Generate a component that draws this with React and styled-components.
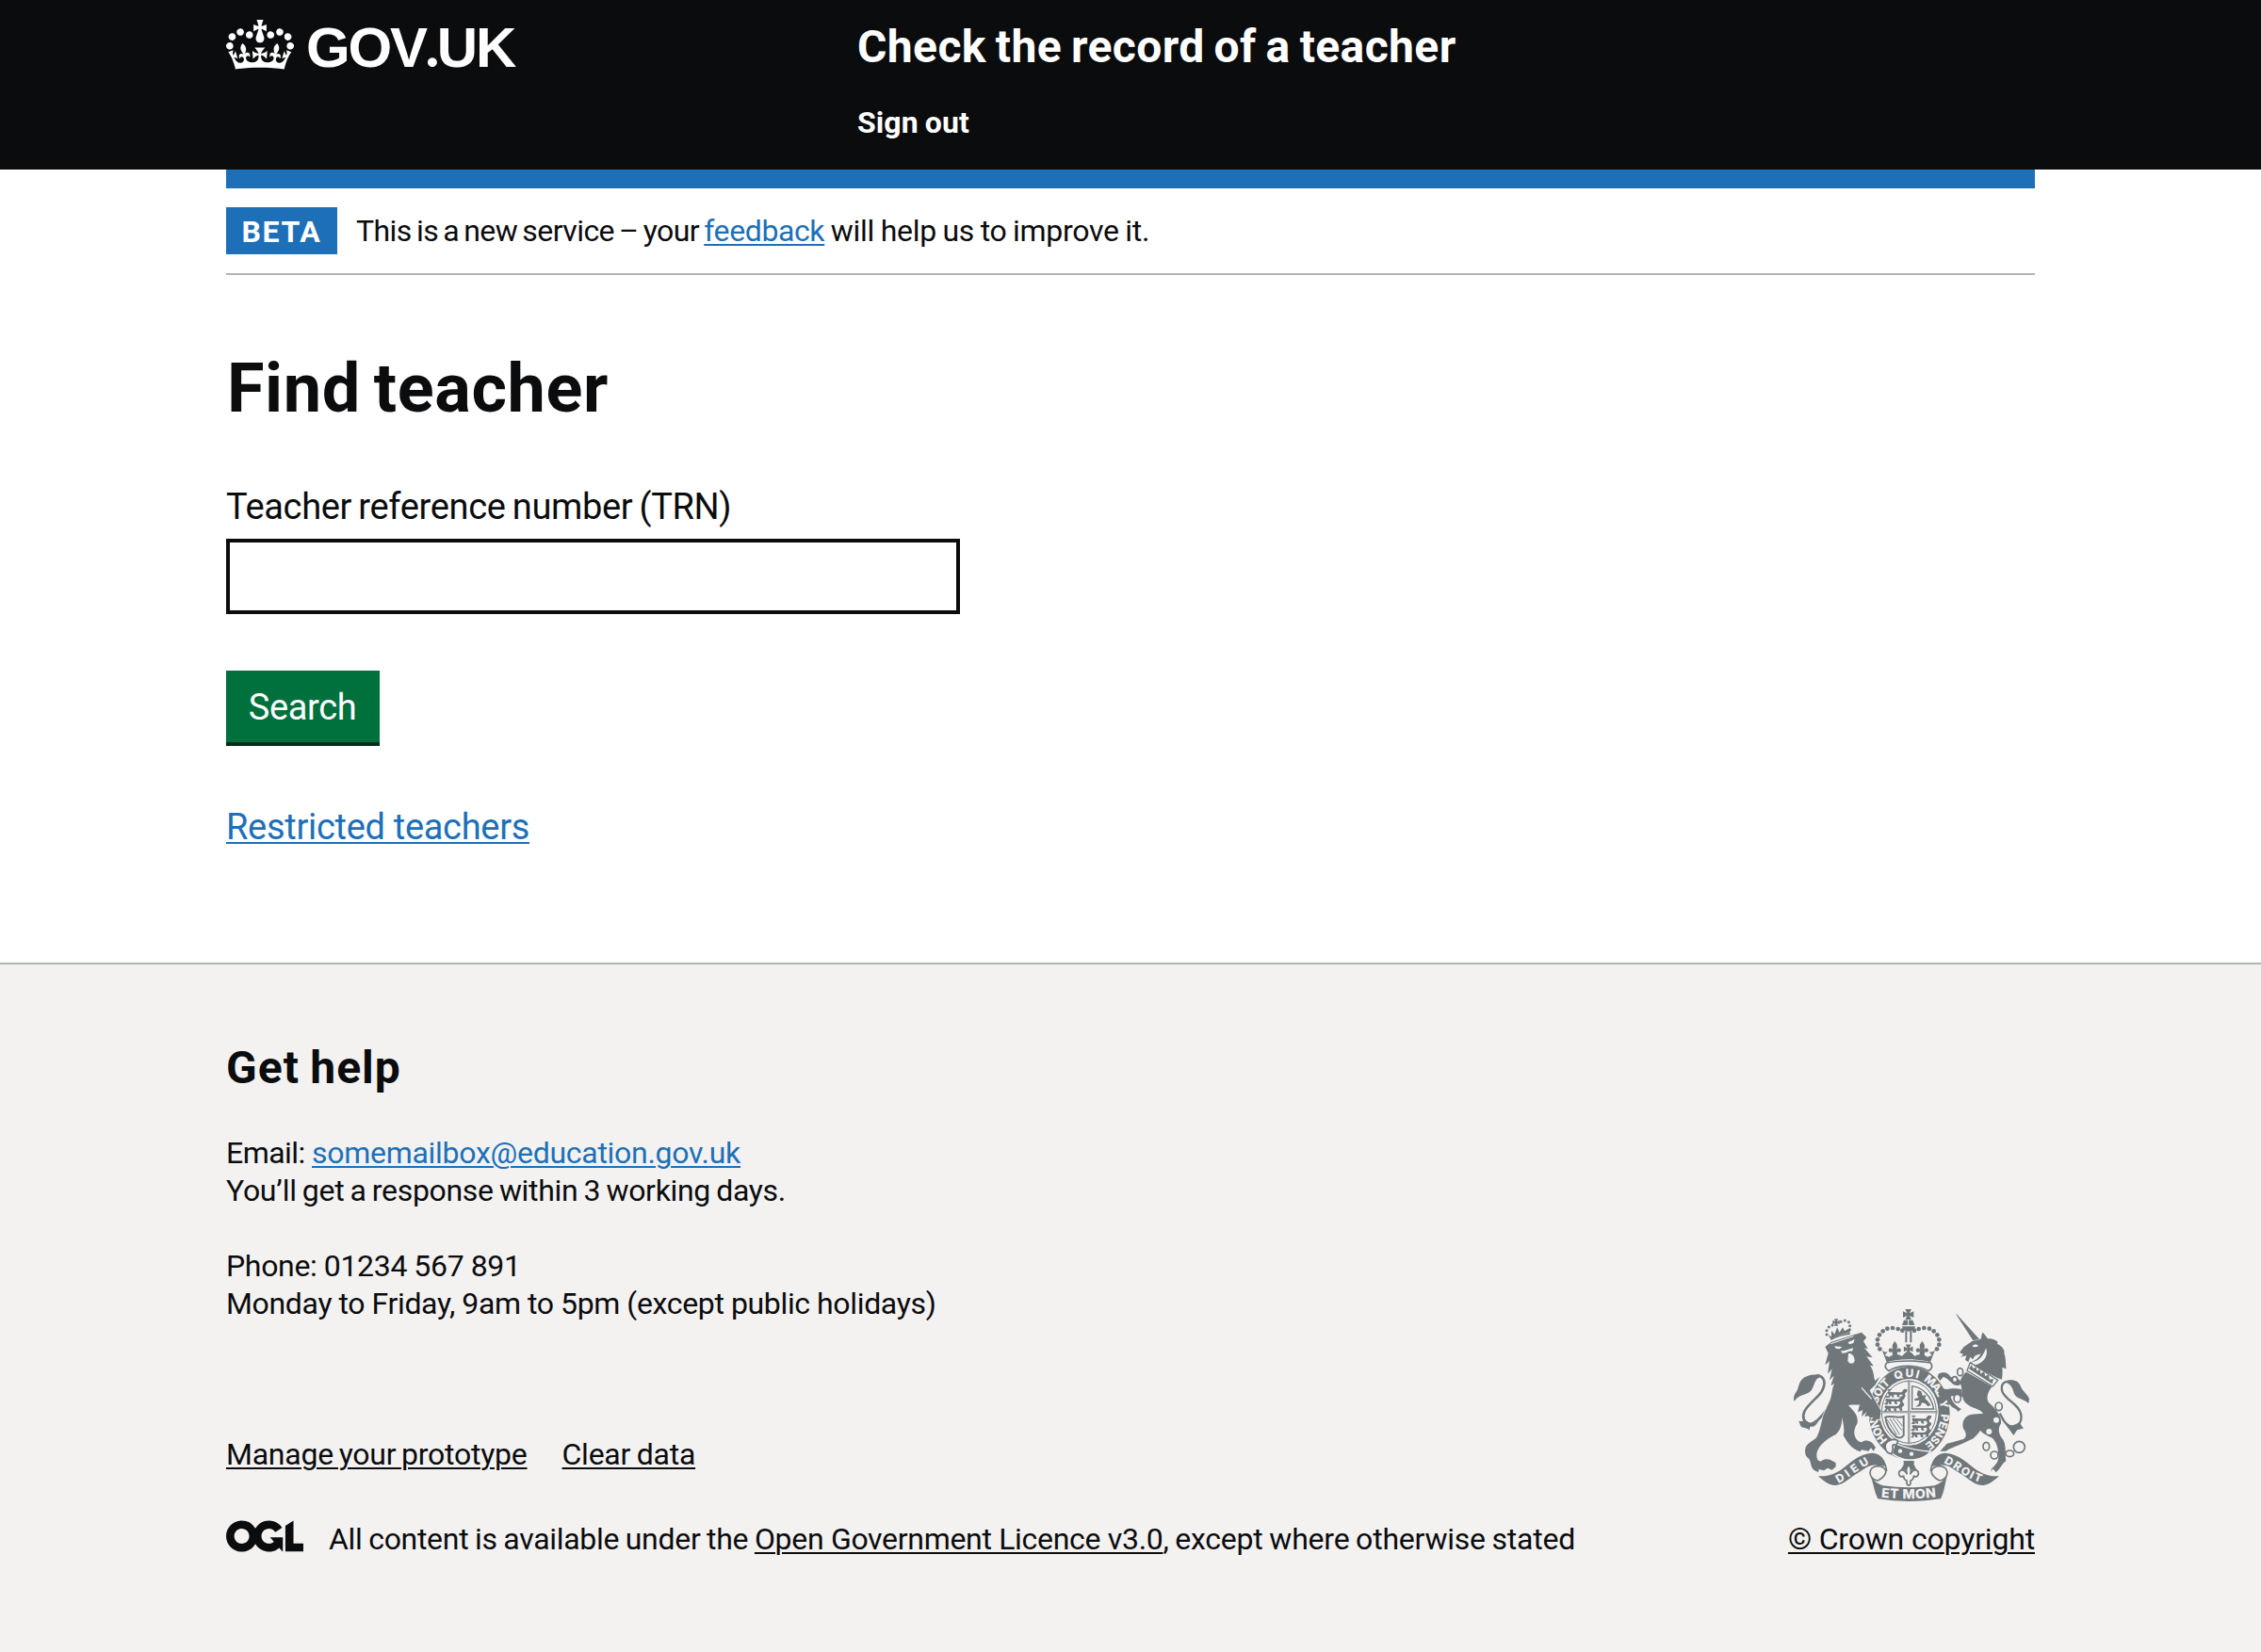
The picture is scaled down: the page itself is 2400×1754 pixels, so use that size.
import React from "react";
import styled, { createGlobalStyle } from "styled-components";

const ink = "#0b0c0e";
const blue = "#1d70b8";
const green = "#00703c";
const rule = "#b1b4b6";
const footerBg = "#f3f2f1";
const crestGrey = "#6f777b";

const GlobalStyle = createGlobalStyle`
  *, *::before, *::after { box-sizing: border-box; }
  body {
    margin: 0;
    background: #fff;
    color: ${ink};
    font-family: Roboto, "Liberation Sans", sans-serif;
    font-size: 32px;
    line-height: 40px;
  }
`;

const Container = styled.div`
  width: 1920px;
  margin: 0 auto;
`;

/* A run of text with its own tracking and word gap. */
const Run = styled.span`
  letter-spacing: ${(p) => p.$ls || 0}px;
  word-spacing: ${(p) => p.$ws || 0}px;
  white-space: pre;
`;

const Link = styled.a`
  color: ${(p) => (p.$dark ? ink : blue)};
  letter-spacing: ${(p) => p.$ls || 0}px;
  word-spacing: ${(p) => p.$ws || 0}px;
  text-decoration: underline;
  text-decoration-thickness: 2px;
  text-underline-offset: 3px;
  white-space: nowrap;
`;

/* ---------- Header ---------- */
const Header = styled.header`
  height: 180px;
  background: ${ink};
  color: #fff;
`;

const HeaderGrid = styled(Container)`
  display: grid;
  grid-template-columns: 670px 1fr;
  align-items: start;
`;

const Logo = styled.a`
  display: flex;
  align-items: flex-start;
  gap: 13px;
  padding-top: 21px;
  color: #fff;
`;

const Crown = styled.svg`
  display: block;
  width: 72px;
  height: 53px;
  fill: currentColor;
`;

const LogoText = styled.span`
  font: 700 60px/54px "Liberation Sans", Arial, sans-serif;
  letter-spacing: -2.2px;
  white-space: nowrap;
`;

const LogoDot = styled.span`
  font-family: Lato, sans-serif;
  font-weight: 900;
`;

const ServiceNav = styled.div`
  display: flex;
  flex-direction: column;
  gap: 30px;
  padding-top: 20px;
`;

const ServiceName = styled.a`
  font-size: 48px;
  line-height: 60px;
  font-weight: 700;
`;

const NavItem = styled.a`
  font-weight: 700;
`;

/* ---------- Phase banner ---------- */
const BlueBar = styled(Container)`
  height: 20px;
  background: ${blue};
`;

const PhaseBanner = styled(Container)`
  display: flex;
  align-items: center;
  gap: 20px;
  padding: 20px 0;
  border-bottom: 2px solid ${rule};
`;

const Tag = styled.strong`
  width: 118px;
  height: 50px;
  padding: 2px 0 0;
  background: ${blue};
  color: #fff;
  font-weight: 700;
  line-height: 48px;
  letter-spacing: 1.6px;
  text-align: center;
`;

/* ---------- Main ---------- */
const Main = styled(Container)`
  display: flex;
  flex-direction: column;
  align-items: flex-start;
  padding: 80px 0 120px;
  font-size: 38px;
  line-height: 50px;
`;

const Title = styled.h1`
  margin: 0 0 59px;
  padding: 1px 0 0 1px;
  font-size: 72px;
  line-height: 80px;
  font-weight: 700;
`;

const Label = styled.label`
  padding-top: 1px;
  margin-bottom: 9px;
`;

const Input = styled.input`
  width: 779px;
  height: 80px;
  margin: 0 0 60px;
  border: 4px solid ${ink};
  border-radius: 0;
  background: #fff;
  font: inherit;
`;

const Button = styled.button`
  width: 163px;
  height: 76px;
  margin: 0 0 65px;
  padding: 3px 1px 0 0;
  border: 0;
  background: ${green};
  box-shadow: 0 4px 0 #002d18;
  color: #fff;
  font: 400 38px/73px Roboto, sans-serif;
  letter-spacing: -0.4px;
  text-align: center;
`;

/* ---------- Footer ---------- */
const Footer = styled.footer`
  margin-top: -1px;
  border-top: 2px solid ${rule};
  background: ${footerBg};
  padding: 80px 0 100px;
`;

const FooterMeta = styled(Container)`
  display: flex;
  justify-content: space-between;
  align-items: flex-end;
`;

const FooterHeading = styled.h2`
  margin: 0 0 40px;
  font-size: 48px;
  line-height: 60px;
  font-weight: 700;
`;

const Contact = styled.p`
  display: flex;
  flex-direction: column;
  margin: 0 0 40px;
`;

const FooterLinks = styled.div`
  display: flex;
  gap: 37px;
  margin: 120px 0 50px;
`;

const Licence = styled.div`
  display: flex;
  align-items: flex-start;
  gap: 27px;
  height: 40px;
`;

const LicenceMark = styled.svg`
  display: block;
  width: 82px;
  height: 34px;
`;

const Copyright = styled.div`
  display: flex;
  flex-direction: column;
  align-items: flex-end;
  gap: 20px;
`;

const Crest = styled.svg`
  display: block;
  width: 250px;
  height: 204px;
  margin-right: 6px;
`;

const Motto = styled.text`
  font-family: Inter, sans-serif;
  font-weight: 800;
  font-size: ${(p) => p.$size || 36}px;
  fill: ${footerBg};
`;

const leftBeads = [[418, 128], [404, 123], [387, 120], [370, 122], [356, 130], [345, 142], [339, 157], [339, 173], [346, 187]];
const lionBeads = [[177, 141], [177, 128], [184, 117], [195, 111], [222, 100], [235, 96], [247, 101], [251, 113], [250, 125]];

const Fleur = ({ x, y, s = 1 }) => (
  <path
    transform={`translate(${x} ${y}) scale(${s})`}
    d="M0-26C10-14 9-8 5 2 9-4 18-6 20 3 19 10 12 11 8 7 9 12 7 16 6 24H-6C-7 16-9 12-8 7-12 11-19 10-20 3-18-6-9-4-5 2-9-8-10-14 0-26Z"
  />
);

const Patee = ({ x, y, s = 1 }) => (
  <path
    transform={`translate(${x} ${y}) scale(${s})`}
    d="M-10-17H10L4-4 17-10V10L4 4 10 17H-10L-4 4-17 10V-10L-4-4Z"
  />
);

const Passant = ({ x, y }) => (
  <g transform={`translate(${x} ${y})`}>
    <path
      d="M2 8C0 2 6-1 11 2L40 3C50 3 48-6 56-8L64-6 62 2 56 6 58 17 50 17 48 10 38 10 40 19 32 18 30 10 20 10 22 19 14 18 12 11 6 20 0 18 6 11ZM2-2C-2-8 6-10 14-6L12-3"
    />
  </g>
);

const RoyalArms = () => (
  <Crest viewBox="72 60 750 612" fill={crestGrey} role="img" aria-label="Royal arms">
    <defs>
      <path id="garter" d="M439 504A102 114 0 0 1 439 276A102 114 0 0 1 439 504" />
      <path id="dieu" d="M214 615C248 598 272 574 324 546" />
      <path id="droit" d="M549 549C592 570 620 600 676 615" />
      <path id="etmon" d="M350 659Q437 669 528 658" />
    </defs>

    {/* imperial crown */}
    <Patee x={437} y={77} />
    <path d="M423 95H451L457 111H417Z" />
    <path d="M417 115H459C457 126 449 131 438 131S419 126 417 115Z" />
    <path d="M437 93V114" stroke={footerBg} strokeWidth="3" />
    <path d="M430 130V166M445 130V166" stroke={crestGrey} strokeWidth="6" />
    {leftBeads.map(([x, y]) => (
      <React.Fragment key={`${x}-${y}`}>
        <circle cx={x} cy={y} r="7" />
        <circle cx={874 - x} cy={y} r="7" />
      </React.Fragment>
    ))}
    <Patee x={437} y={187} s={0.85} />
    <Fleur x={394} y={188} />
    <Fleur x={481} y={188} />
    <path d="M350 182C355 196 364 200 372 194L362 207 376 212C392 201 408 202 416 210L428 198H446L458 210C466 202 482 201 498 212L512 207 502 194C510 200 520 196 525 182L507 229C470 217 406 217 368 229Z" />
    <path d="M368 231C406 223 468 223 508 231C516 243 511 251 500 257C470 236 405 236 375 257C364 250 360 241 368 231Z" fill={footerBg} stroke={crestGrey} strokeWidth="5" />

    {/* garter and shield */}
    <ellipse cx="440" cy="391" rx="129" ry="148" />
    <ellipse cx="439" cy="388" rx="94" ry="106" fill={footerBg} />
    <ellipse cx="439" cy="388" rx="87" ry="99" fill="none" stroke={crestGrey} strokeWidth="3" />
    <path d="M439 286V490M348 388H530" stroke={crestGrey} strokeWidth="6" />
    <path d="M439 286V490M348 388H530" stroke={footerBg} strokeWidth="1.5" />
    <Passant x={370} y={322} />
    <Passant x={362} y={344} />
    <Passant x={360} y={366} />
    <Passant x={447} y={406} />
    <Passant x={447} y={428} />
    <Passant x={445} y={450} />
    <path d="M449 305C485 310 510 338 518 378H449Z" fill="none" stroke={crestGrey} strokeWidth="4" />
    <path d="M468 318L478 322 482 335 494 334 490 344 502 356 508 366 500 370 490 360 480 358 476 368 460 372 470 362 472 350 458 352 456 346 470 342 464 332Z" />
    <path d="M364 404C380 396 400 410 422 402V462C412 476 402 468 398 466C378 448 366 424 364 404Z" fill="none" stroke={crestGrey} strokeWidth="6" />
    <path d="M378 408L410 460M388 408L416 446M400 410L418 432M370 412L400 460" stroke={crestGrey} strokeWidth="3" />
    <Motto><textPath href="#garter" startOffset="11%" textLength="76">HON</textPath></Motto>
    <Motto><textPath href="#garter" startOffset="29%" textLength="80">SOIT</textPath></Motto>
    <Motto><textPath href="#garter" startOffset="43.5%" textLength="74">QUI</textPath></Motto>
    <Motto><textPath href="#garter" startOffset="57%" textLength="72">MAL</textPath></Motto>
    <Motto><textPath href="#garter" startOffset="69.3%">Y</textPath></Motto>
    <Motto><textPath href="#garter" startOffset="75.5%" textLength="114">PENSE</textPath></Motto>

    {/* buckle and strap */}
    <path d="M394 488C430 502 470 512 508 513C495 530 470 540 440 540C420 540 400 530 385 520Z" stroke={footerBg} strokeWidth="4" />
    <path d="M364 490C372 476 394 470 404 480L398 494C388 488 384 494 388 504L384 520C370 522 360 506 364 490Z" fill={footerBg} stroke={crestGrey} strokeWidth="5" />
    <circle cx="411" cy="512" r="6.5" fill={footerBg} />
    <circle cx="447" cy="521" r="6.5" fill={footerBg} />
    <path d="M422 543H455V556L464 572H412L422 556Z" />
    <path d="M438 556C448 568 446 576 443 586C452 566 470 570 469 586C466 597 456 594 454 590C454 600 450 604 444 606V616C442 623 434 623 432 616V606C426 604 422 600 422 590C420 594 410 597 407 586C406 570 424 566 433 586C430 576 428 568 438 556Z" fill={footerBg} stroke={crestGrey} strokeWidth="5" />

    {/* lion */}
    <g>
      <path d="M145 270C172 274 176 296 160 324C145 345 118 362 106 386C98 404 104 422 122 426C146 424 160 400 180 378" fill="none" stroke={crestGrey} strokeWidth="8" />
      <path d="M160 274C140 262 116 272 104 278C84 294 90 312 78 326C70 336 72 350 74 354C84 338 100 334 116 328C136 320 134 296 146 282Z" />
      <path d="M88 416C100 420 106 412 116 418C126 428 140 424 152 416C142 428 140 436 124 434L122 446C116 436 98 440 94 432Z" />
      <path d="M172 180L192 164L255 144L288 134L304 150L294 162L308 186L297 184L323 214L304 211L326 241L315 240C328 256 326 276 331 288L346 275L331 302L314 318C324 340 338 362 350 384L346 412L336 410L332 418L318 414L326 404L314 406L310 400L298 402L304 388L288 402L292 382L276 388L282 364C268 366 256 362 246 366C262 384 278 396 275 422C268 436 262 446 266 462C270 474 276 482 288 484C300 474 318 480 324 488L333 500L326 512L318 502L310 512L288 508L284 514L274 510C252 500 240 480 230 462C234 448 232 430 225 404C226 430 220 446 205 460C180 472 154 490 146 516C142 534 150 548 160 544C176 532 192 540 206 550L206 562L194 572L180 566L168 574L152 570L150 580L136 572C124 560 128 546 120 536C108 530 106 512 110 500C118 484 134 480 145 468C156 446 160 420 166 398L184 358C196 336 192 312 202 296L190 304L200 272L186 286L194 250L180 266L186 226L172 238L182 200Z" stroke={footerBg} strokeWidth="4" paintOrder="stroke" />
      <path d="M201 178L226 180L218 187L206 185ZM244 166L266 156L262 168L250 172ZM222 192C236 196 246 186 262 184L258 194C248 190 238 202 226 200Z" fill={footerBg} />
      <path d="M246 202C256 196 266 212 266 224C264 236 248 236 244 224Z" fill={footerBg} />
      <path d="M288 310L320 346" stroke={footerBg} strokeWidth="4" />
      <path d="M190 170L262 146" stroke={footerBg} strokeWidth="3" />
      {lionBeads.map(([x, y]) => <circle key={`${x}-${y}`} cx={x} cy={y} r="4.5" />)}
      <Patee x={207} y={102} s={0.65} />
      <path d="M182 142L192 148 192 128 202 140 210 118 218 134 228 118 234 130 244 124 252 122 250 136C226 138 208 146 190 156Z" />
      <path d="M190 157C208 147 228 141 252 138" fill="none" stroke={crestGrey} strokeWidth="4" />
    </g>

    {/* unicorn */}
    <g>
      <path d="M588 75L592 77L663 155L643 160Z" />
      <path d="M600 198L614 180L640 162L666 156C672 150 668 140 674 134C680 140 684 146 690 154C702 152 712 156 722 164L720 171C736 176 746 194 742 202C748 214 746 232 749 250L736 246C738 262 736 272 735 284L722 280L630 233C644 226 660 220 668 202L650 208L642 220L634 212L628 228L618 222L622 208L604 212L612 204Z" />
      <path d="M640 178C648 170 656 172 660 178C652 182 646 182 640 178ZM684 184C694 208 676 234 648 238L636 230C664 226 676 208 684 184Z" fill={footerBg} />
      <path d="M634 230L722 286L706 306L624 256Z" fill={footerBg} stroke={crestGrey} strokeWidth="4" />
      <path d="M630 250L638 238 644 250 652 244 656 258 664 250 668 266 678 258 682 274 692 268 696 284 708 282 704 298Z" />
      <path d="M622 260L704 307C690 322 684 342 692 356C712 374 736 400 732 424C722 440 722 456 740 478C750 500 744 520 748 544C736 550 730 570 716 580L706 568L700 578L702 568C716 556 726 544 724 524C722 506 722 488 704 470C692 464 676 458 666 446C658 458 650 466 644 472C622 482 594 496 566 506L556 512L538 512L560 488L578 484L612 474C624 468 622 452 612 440C606 420 616 400 636 396C650 392 664 394 676 392C660 374 640 376 624 362C604 350 610 322 604 300C600 286 608 270 622 260Z" />
      <path d="M533 266C552 256 566 264 572 276C584 280 600 276 606 296C598 306 586 304 576 296C568 288 556 276 548 276L538 288L530 276Z" />
      <path d="M543 310C560 322 576 306 606 316L610 340C592 336 578 334 572 338C576 356 592 370 606 378L596 386L588 378C570 372 560 350 552 338C546 332 536 328 530 322Z" />
      <path d="M764 290C740 288 730 300 736 322C746 350 790 362 796 396C800 424 780 440 764 434C744 428 738 410 728 392" fill="none" stroke={crestGrey} strokeWidth="7" />
      <path d="M750 288C770 282 788 288 794 304C800 322 820 334 822 346L820 360C806 346 782 346 774 330C770 316 768 304 750 294Z" />
      <path d="M744 424C756 436 776 430 790 420L804 440C794 440 790 444 784 444L772 462C766 452 756 442 744 424Z" />
      <g fill="none" stroke={crestGrey} strokeWidth="5">
        <ellipse cx="602" cy="260" rx="9" ry="12" />
        <ellipse cx="685" cy="497" rx="10" ry="13" />
        <circle cx="711" cy="525" r="12" />
        <ellipse cx="760" cy="520" rx="13" ry="10" />
        <circle cx="790" cy="499" r="18" />
      </g>
      <g fill={footerBg} stroke={crestGrey} strokeWidth="5">
        <ellipse cx="585" cy="284" rx="8" ry="9" />
        <ellipse cx="593" cy="344" rx="11" ry="13" />
        <ellipse cx="725" cy="370" rx="11" ry="13" />
      </g>
      <circle cx="717" cy="413" r="9" fill={footerBg} />
      <circle cx="694" cy="450" r="9" fill={footerBg} />
    </g>

    {/* ribbon */}
    <path d="M150 592C180 592 196 588 222 572C250 552 278 520 322 518C350 520 362 540 364 560L340 558C318 552 300 566 270 586C240 606 226 622 200 621C180 618 166 606 150 592Z" />
    <path d="M726 592C696 592 680 588 654 572C626 552 598 520 554 518C526 520 514 540 512 560L536 558C558 552 576 566 606 586C636 606 650 622 676 621C696 618 710 606 726 592Z" />
    <path d="M340 559C366 562 376 580 350 600L340 606C310 604 304 562 340 559ZM536 559C510 562 500 580 526 600L536 606C566 604 572 562 536 559Z" fill={footerBg} stroke={crestGrey} strokeWidth="5" />
    <path d="M336 524C356 534 366 556 368 576M540 524C520 534 510 556 508 576" fill="none" stroke={crestGrey} strokeWidth="5" />
    <path d="M314 584C320 604 340 616 356 622Q438 634 520 622C536 616 556 604 562 584C554 612 552 640 540 664Q438 680 340 664C328 640 326 612 314 584Z" />
    <Motto $size={36}><textPath href="#dieu" textLength="118">DIEU</textPath></Motto>
    <Motto $size={36}><textPath href="#droit" textLength="134">DROIT</textPath></Motto>
    <Motto $size={42}><textPath href="#etmon" textLength="176">ET MON</textPath></Motto>
  </Crest>
);

const CrownIcon = () => (
  <Crown viewBox="0 0 132 97" aria-hidden="true">
    <path
      fillRule="evenodd"
      d="M25 30.2c3.5 1.5 7.7-.2 9.1-3.7 1.5-3.6-.2-7.8-3.9-9.2-3.6-1.4-7.6.3-9.1 3.9-1.4 3.5.3 7.5 3.9 9zM9 39.5c3.6 1.5 7.8-.2 9.2-3.7 1.5-3.6-.2-7.8-3.9-9.1-3.6-1.5-7.6.2-9.1 3.8-1.4 3.5.3 7.5 3.8 9zM4.4 57.2c3.5 1.5 7.7-.2 9.1-3.8 1.5-3.6-.2-7.7-3.9-9.1-3.5-1.5-7.6.3-9.1 3.8-1.4 3.5.3 7.6 3.9 9.1zm38.3-21.4c3.5 1.5 7.7-.2 9.1-3.8 1.5-3.6-.2-7.7-3.9-9.1-3.6-1.5-7.6.3-9.1 3.8-1.3 3.6.4 7.7 3.9 9.1zm64.4-5.6c-3.6 1.5-7.8-.2-9.1-3.7-1.5-3.6.2-7.8 3.8-9.2 3.6-1.4 7.7.3 9.2 3.9 1.3 3.5-.4 7.5-3.9 9zm15.9 9.3c-3.6 1.5-7.7-.2-9.1-3.7-1.5-3.6.2-7.8 3.7-9.1 3.6-1.5 7.7.2 9.2 3.8 1.5 3.5-.3 7.5-3.8 9zm4.7 17.7c-3.6 1.5-7.8-.2-9.2-3.8-1.5-3.6.2-7.7 3.9-9.1 3.6-1.5 7.7.3 9.2 3.8 1.3 3.5-.4 7.6-3.9 9.1zM89.3 35.8c-3.6 1.5-7.8-.2-9.2-3.8-1.4-3.6.2-7.7 3.9-9.1 3.6-1.5 7.7.3 9.2 3.8 1.4 3.6-.3 7.7-3.9 9.1zM69.7 17.7l8.9 4.7V9.3l-8.9 2.8c-.2-.3-.5-.6-.9-.9L72.4 0H59.6l3.5 11.2c-.3.3-.6.5-.9.9l-8.8-2.8v13.1l8.8-4.7c.3.3.6.7.9.9l-5 15.4v.1c-.2.8-.4 1.6-.4 2.4 0 4.1 3.1 7.5 7 8.1h.2c.3 0 .7.1 1 .1.4 0 .7 0 1-.1h.2c4-.6 7.1-4.1 7.1-8.1 0-.8-.1-1.7-.4-2.4V34l-5.1-15.4c.4-.2.7-.6 1-.9zM66 92.8c16.9 0 32.8 1.1 47.1 3.2 4-16.9 8.9-26.7 14-33.5l-9.6-3.4c1 4.9 1.1 7.2 0 10.2-1.5-1.4-3-4.3-4.2-8.7L108.6 76c2.8-2 5-3.2 7.5-3.3-4.4 9.4-10 11.9-13.6 11.2-4.3-.8-6.3-4.6-5.6-7.9 1-4.7 5.7-5.9 8-.5 4.3-8.7-3-11.4-7.6-8.8 7.1-7.2 7.9-13.5 2.1-21.1-8 6.1-8.1 12.3-4.5 20.8-4.7-5.4-12.1-2.5-9.5 6.2 3.4-5.2 7.9-2 7.2 3.1-.6 4.3-6.4 7.8-13.5 7.2-10.3-.9-10.9-8-11.2-13.8 2.5-.5 7.1 1.8 11 7.3L80.2 60c-4.1 4.4-8 5.3-12.3 5.4 1.4-4.4 8-11.6 8-11.6H55.5s6.4 7.2 7.9 11.6c-4.2-.1-8-1-12.3-5.4l1.4 16.4c3.9-5.5 8.5-7.7 10.9-7.3-.3 5.8-.9 12.8-11.1 13.8-7.2.6-12.9-2.9-13.5-7.2-.7-5 3.8-8.3 7.1-3.1 2.7-8.7-4.6-11.6-9.4-6.2 3.7-8.5 3.6-14.7-4.6-20.8-5.8 7.6-5 13.9 2.2 21.1-4.7-2.6-11.9.1-7.7 8.8 2.3-5.5 7.1-4.2 8.1.5.7 3.3-1.3 7.1-5.7 7.9-3.5.7-9-1.8-13.5-11.2 2.5.1 4.7 1.3 7.5 3.3l-4.7-15.4c-1.2 4.4-2.7 7.2-4.3 8.7-1.1-3-.9-5.3 0-10.2l-9.5 3.4c5 6.9 9.9 16.7 14 33.5 14.8-2.1 30.8-3.2 47.7-3.2z"
    />
  </Crown>
);

const OglMark = () => (
  <LicenceMark viewBox="0 0 483.2 195.7" fill={ink} role="img" aria-label="Open Government Licence">
    <path d="M421.5 142.8V.1l-50.7 32.3v161.1h112.4v-50.7zm-122.3-9.6A47.12 47.12 0 0 1 221 97.8c0-26 21.1-47.1 47.1-47.1 16.7 0 31.4 8.7 39.7 21.8l42.7-27.2A97.63 97.63 0 0 0 268.1 0c-36.5 0-68.3 20.1-85.1 49.7A98 98 0 0 0 97.8 0C43.9 0 0 43.9 0 97.8s43.9 97.8 97.8 97.8c36.5 0 68.3-20.1 85.1-49.7a97.76 97.76 0 0 0 149.6 25.4l19.4 22.2h3v-87.8h-80l24.3 27.5zM97.8 145c-26 0-47.1-21.1-47.1-47.1s21.1-47.1 47.1-47.1 47.1 21.1 47.1 47.1S123.8 145 97.8 145" />
  </LicenceMark>
);

export default function App() {
  return (
    <>
      <GlobalStyle />
      <Header>
        <HeaderGrid>
          <Logo>
            <CrownIcon />
            <LogoText>GOV<LogoDot>.</LogoDot>UK</LogoText>
          </Logo>
          <ServiceNav>
            <ServiceName><Run $ls={0.4} $ws={-2.4}>Check the record of a teacher</Run></ServiceName>
            <NavItem><Run $ls={0.1} $ws={-1}>Sign out</Run></NavItem>
          </ServiceNav>
        </HeaderGrid>
      </Header>

      <BlueBar />
      <PhaseBanner>
        <Tag>BETA</Tag>
        <div>
          <Run $ls={-0.55} $ws={-2.3}>{"This is a new service – your "}</Run>
          <Link $ls={-0.38}>feedback</Link>
          <Run $ls={-0.3} $ws={-1}>{" will help us to improve it."}</Run>
        </div>
      </PhaseBanner>

      <Main as="main">
        <Title><Run $ls={0.6} $ws={-4.5}>Find teacher</Run></Title>
        <Label htmlFor="trn"><Run $ls={-0.35} $ws={-1.8}>Teacher reference number (TRN)</Run></Label>
        <Input id="trn" type="text" />
        <Button type="button">Search</Button>
        <Link $ls={-0.3}>Restricted teachers</Link>
      </Main>

      <Footer>
        <FooterMeta>
          <div>
            <FooterHeading><Run $ls={1} $ws={-1.5}>Get help</Run></FooterHeading>
            <Contact>
              <span>
                <Run $ls={-0.56}>{"Email: "}</Run>
                <Link $ls={-0.28}>somemailbox@education.gov.uk</Link>
              </span>
              <Run $ls={-0.32} $ws={-1.4}>You’ll get a response within 3 working days.</Run>
            </Contact>
            <Contact>
              <Run $ls={-0.33} $ws={-0.3}>Phone: 01234 567 891</Run>
              <Run $ls={-0.34} $ws={-0.3}>Monday to Friday, 9am to 5pm (except public holidays)</Run>
            </Contact>
            <FooterLinks>
              <Link $dark $ls={-0.25} $ws={-1.9}>Manage your prototype</Link>
              <Link $dark $ls={-0.25} $ws={-1}>Clear data</Link>
            </FooterLinks>
            <Licence>
              <OglMark />
              <div>
                <Run $ls={-0.3} $ws={-1}>{"All content is available under the "}</Run>
                <Link $dark $ls={-0.31}>Open Government Licence v3.0</Link>
                <Run $ls={-0.22} $ws={-1}>, except where otherwise stated</Run>
              </div>
            </Licence>
          </div>
          <Copyright>
            <RoyalArms />
            <Link $dark $ls={-0.17}>© Crown copyright</Link>
          </Copyright>
        </FooterMeta>
      </Footer>
    </>
  );
}
